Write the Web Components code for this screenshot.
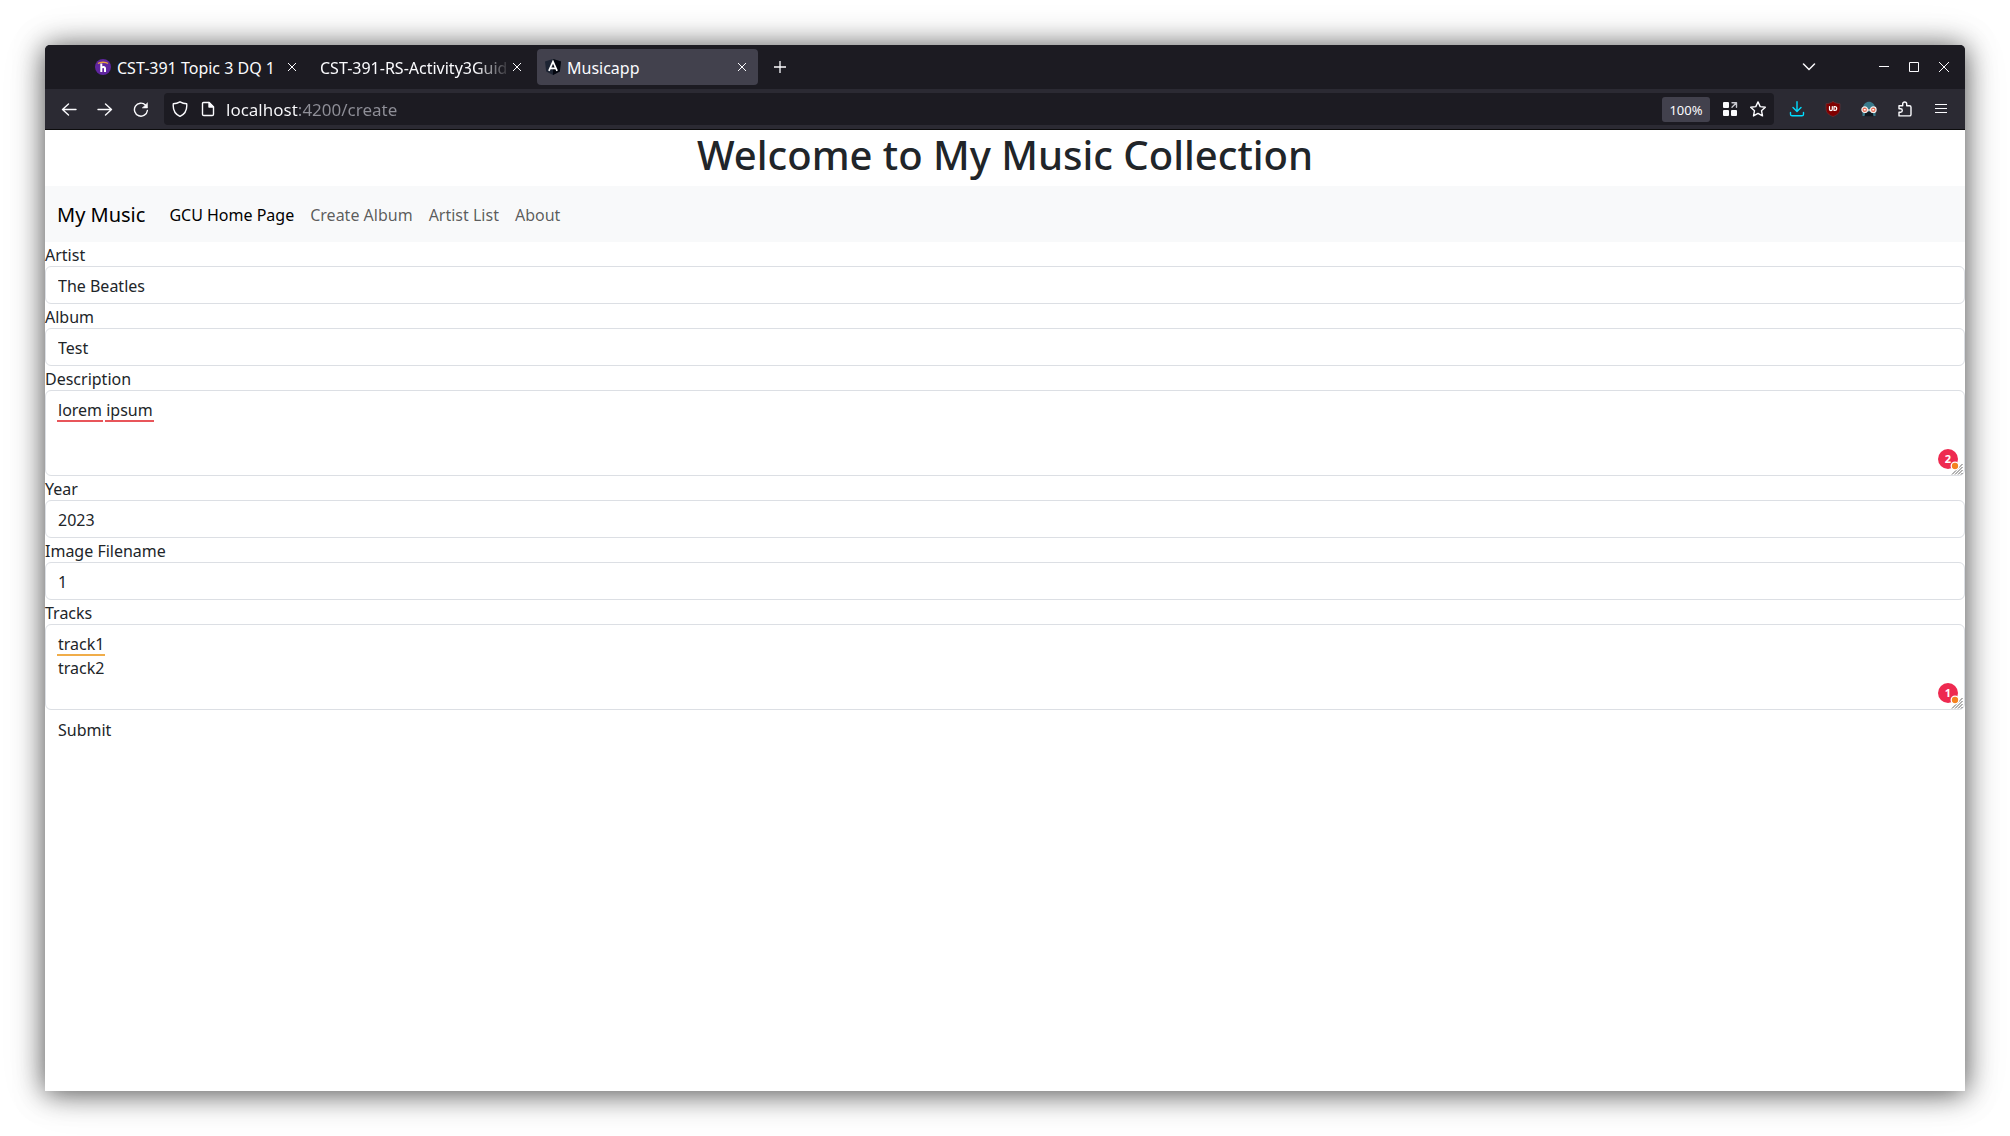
<!DOCTYPE html>
<html lang="en">
<head>
<meta charset="utf-8">
<title>Musicapp</title>
<style>
  body { margin: 0; background: #fff; font: 16px/24px "Noto Sans", sans-serif; color: #212529; }
</style>
</head>
<body>
<browser-window>
  <tab-strip slot="tabs">
    <browser-tab label="CST-391 Topic 3 DQ 1">
      <svg slot="icon" width="16" height="16" viewBox="0 0 16 16"><circle cx="8" cy="8" r="8" fill="#5f259f"/><path d="M6.300 4.600V13M6.300 9c.5-1.300 3.700-1.700 3.700.6V13" fill="none" stroke="#fff" stroke-width="2"/><path d="M3 4.600C5 2.800 11 2.800 13 4.600" fill="none" stroke="#e8a33d" stroke-width="1.300"/></svg>
    </browser-tab>
    <browser-tab label="CST-391-RS-Activity3Guid" fade></browser-tab>
    <browser-tab label="Musicapp" active>
      <svg slot="icon" width="16" height="16" viewBox="0 0 16 16"><path d="M8 0l8 2.600-1.200 10L8 16l-6.800-3.400L0 2.600z" fill="#1d2433"/><path d="M8 0l8 2.600-1.200 10L8 16z" fill="#03060f"/><path d="M3.900 11.900L8 2.600l4.100 9.300M5.600 9.300h4.800" fill="none" stroke="#fff" stroke-width="1.700"/></svg>
    </browser-tab>
  </tab-strip>
  <tool-bar slot="toolbar"></tool-bar>
  <music-app></music-app>
</browser-window>

<script>
const define = (name, html, setup) => {
  const template = document.createElement('template');
  template.innerHTML = html;
  customElements.define(name, class extends HTMLElement {
    constructor() {
      super();
      this.attachShadow({ mode: 'open' }).append(template.content.cloneNode(true));
    }
    connectedCallback() { if (setup) setup(this, this.shadowRoot); }
  });
};

define('browser-window', `
  <style>
    :host { display: flex; flex-direction: column; margin: 45px; min-height: calc(100vh - 90px); background: #fff;
      border-radius: 5px 5px 0 0; box-shadow: 0 2px 28px rgba(0,0,0,.66), 0 2px 48px rgba(0,0,0,.12); }
    header { background: #2b2a33; border-radius: 5px 5px 0 0; border-bottom: 1px solid #0c0c0d; overflow: hidden; }
  </style>
  <header><slot name="tabs"></slot><slot name="toolbar"></slot></header>
  <slot></slot>`);

define('tab-strip', `
  <style>
    :host { display: flex; align-items: center; gap: 4px; height: 44px; padding: 0 6px 0 42px; background: #1c1b22; }
    button { display: grid; place-items: center; width: 36px; height: 36px; padding: 0; border: 0; background: none; color: #fbfbfe; }
    .space { flex: 1; }
    .controls { display: flex; }
    .controls button { width: 30px; }
    .list { margin-right: 38px; }
    svg { fill: none; stroke: currentColor; }
  </style>
  <slot></slot>
  <button aria-label="New tab"><svg width="12" height="12" stroke-width="1.300"><path d="M6 0v12M0 6h12"/></svg></button>
  <span class="space"></span>
  <button class="list" aria-label="List all tabs"><svg width="14" height="8" stroke-width="1.500"><path d="M1.500 1L7 6.500 12.500 1" stroke-linecap="round"/></svg></button>
  <div class="controls">
    <button aria-label="Minimize"><svg width="10" height="10"><path d="M0 4.500h10"/></svg></button>
    <button aria-label="Maximize"><svg width="10" height="10"><path d="M.5.5h9v9h-9z"/></svg></button>
    <button aria-label="Close window"><svg width="10" height="10"><path d="M0 0l10 10M10 0L0 10"/></svg></button>
  </div>`);

define('browser-tab', `
  <style>
    :host { display: flex; align-items: center; box-sizing: border-box; width: 221px; height: 36px; padding: 0 4px 0 8px; border-radius: 4px; color: #fbfbfe; }
    :host([active]) { background: #42414d; }
    ::slotted(svg) { display: block; margin-right: 6px; }
    span { flex: 1; min-width: 0; padding-top: 2px; white-space: nowrap; }
    :host([fade]) span { margin-right: -6px; -webkit-mask-image: linear-gradient(to left, transparent, #000 36px); mask-image: linear-gradient(to left, transparent, #000 36px); }
    button { display: grid; place-items: center; width: 24px; height: 24px; padding: 0; border: 0; background: none; color: #fbfbfe; }
  </style>
  <slot name="icon"></slot><span></span>
  <button aria-label="Close tab"><svg width="8" height="8" fill="none" stroke="currentColor"><path d="M0 0l8 8M8 0L0 8"/></svg></button>`,
  (el, root) => { root.querySelector('span').textContent = el.getAttribute('label'); });

define('tool-bar', `
  <style>
    :host { display: flex; align-items: center; height: 40px; padding: 0 6px; color: #fbfbfe; }
    button { display: grid; place-items: center; width: 36px; height: 32px; padding: 0; border: 0; background: none; color: inherit; font: inherit; }
    svg { fill: none; stroke: currentColor; stroke-width: 1.400; stroke-linecap: round; stroke-linejoin: round; }
    .url { flex: 1; display: flex; align-items: center; height: 32px; margin: 0 5px; padding: 0 2px; border-radius: 4px; background: #1c1b22; }
    .url button { width: 28px; }
    .url input { flex: 1; min-width: 0; margin: 0 4px; padding: 2px 0 0; border: 0; outline: 0; font: inherit; font-size: 17px; line-height: 24px; color: #fbfbfe;
      background: linear-gradient(to right, #fbfbfe 72px, #8f8f98 72px); -webkit-background-clip: text; background-clip: text; -webkit-text-fill-color: transparent; }
    .url .zoom { width: 48px; height: 25px; margin-right: 6px; padding-top: 1px; border-radius: 3px; background: #42414d; font-size: 13px; line-height: 24px; }
  </style>
  <button aria-label="Back"><svg width="16" height="16"><path d="M15 8.500H1.500M7.500 3L1.500 8.500l6 5.500"/></svg></button>
  <button aria-label="Forward"><svg width="16" height="16"><path d="M1 8.500h13.500M8.500 3l6 5.500-6 5.500"/></svg></button>
  <button aria-label="Reload"><svg width="16" height="16"><path d="M14.400 9.500A6.500 6.500 0 1 1 12.500 4"/><path d="M14.500 2v5h-5z" fill="currentColor" stroke-width=".5"/></svg></button>
  <div class="url">
    <button aria-label="Tracking protection"><svg width="16" height="16"><path d="M8 .8C6 2 3.500 2.700 1.300 2.800.8 8 2.700 13 8 15.400c5.300-2.400 7.200-7.400 6.700-12.600C12.500 2.700 10 2 8 .8z"/></svg></button>
    <button aria-label="Site information"><svg width="16" height="16"><path d="M3.500 1.500H9L13.500 6v7.200q0 1.300-1.300 1.300H3.800q-1.300 0-1.300-1.300V2.500q0-1 1-1z"/><path d="M9 1.500V6h4.500z" fill="currentColor"/></svg></button>
    <input type="text" aria-label="Address" value="localhost:4200/create" spellcheck="false">
    <button class="zoom">100%</button>
    <button aria-label="Apps"><svg width="16" height="16"><g fill="currentColor" stroke="none"><rect x="1" y="1" width="6" height="6" rx="1"/><rect x="1" y="9" width="6" height="6" rx="1"/><rect x="9" y="9" width="6" height="6" rx="1"/></g><path d="M10 1.700h4.500v4.500M14.200 2L10 6.200" stroke="#c8c8cf"/></svg></button>
    <button aria-label="Bookmark"><svg width="16" height="16"><path d="M8 .9l2.200 4.700 5.100.6-3.800 3.500 1 5.200L8 12.400l-4.500 2.500 1-5.200L.7 6.200l5.100-.6z"/></svg></button>
  </div>
  <button aria-label="Downloads" style="color:#00ddff"><svg width="16" height="16"><path d="M8 .8v9.400M4 6.500l4 4 4-4M1.500 11.500v1.700q0 1.600 1.600 1.600h9.800q1.600 0 1.600-1.600v-1.700"/></svg></button>
  <button aria-label="uBlock Origin"><svg width="16" height="16"><path d="M8 .5C6 2 3.500 2.600 1 2.700v5C1 12 4 14 8 15.600c4-1.600 7-3.600 7-7.900v-5C12.500 2.600 10 2 8 .5z" fill="#800000" stroke="#65343b" stroke-width=".7"/><path d="M4.500 5.500v2.800c0 1.700 2.800 1.700 2.800 0V5.500M9 5.700h.8a1.900 1.900 0 0 1 0 3.800H9z" stroke="#fff" stroke-width="1.200"/></svg></button>
  <button aria-label="Privacy extension"><svg width="16" height="16"><g stroke="none"><path d="M2 8C1.500-1.600 14.500-1.600 14 8z" fill="#397a8b"/><path d="M1.500 10h13v5h-13z" fill="#397a8b"/><path d="M3.500 15.300l1-4.500h7l1 4.500z" fill="#111820"/></g><path d="M6 9h4" stroke="#f3efee" stroke-width="1.500"/><g fill="#e66b51" stroke="#f3efee" stroke-width="1.200"><circle cx="3.700" cy="8.700" r="2.800"/><circle cx="12.300" cy="8.700" r="2.800"/></g><path d="M3.300 8.700h.9M11.800 8.700h.9" stroke="#fff"/></svg></button>
  <button aria-label="Extensions"><svg width="16" height="16"><path d="M2 14.900V11.200h1.600a1.700 1.700 0 0 0 0-3.400H2V4.700h3.700V3a2 2 0 0 1 4 0v1.700H12.500q1.500 0 1.500 1.500v7.200q0 1.500-1.500 1.500z"/></svg></button>
  <button aria-label="Menu"><svg width="16" height="16" style="stroke-width:1.200;stroke-linecap:butt"><path d="M2 3.500h12M2 7.500h12M2 11.500h12"/></svg></button>`);

define('music-app', `
  <style>
    :host { display: block; }
    h1 { margin: 0; padding: 1px 0 7px; font-size: 40px; line-height: 48px; font-weight: 500; text-align: center; }
    form { display: block; }
    button { display: block; padding: 7px 12px 5px; border: 1px solid transparent; border-radius: 6px; background: none; color: inherit; font: inherit; }
  </style>
  <h1>Welcome to My Music Collection</h1>
  <nav-bar></nav-bar>
  <form>
    <form-field label="Artist" value="The Beatles"></form-field>
    <form-field label="Album" value="Test"></form-field>
    <form-field label="Description" value="lorem ipsum" rows="3" issues="2">
      <text-mark style="--width:46px"></text-mark><text-mark style="--width:49px"></text-mark>
    </form-field>
    <form-field label="Year" value="2023"></form-field>
    <form-field label="Image Filename" value="1"></form-field>
    <form-field label="Tracks" value="track1&#10;track2" rows="3" issues="1">
      <text-mark style="--width:48px;--color:#f0ad4a"></text-mark>
    </form-field>
    <button type="button">Submit</button>
  </form>`);

define('nav-bar', `
  <style>
    :host { display: block; background: #f8f9fa; }
    nav { display: flex; align-items: center; padding: 8px 12px; }
    a { padding: 9px 8px 7px; color: rgba(0,0,0,.65); text-decoration: none; }
    a.brand { margin-right: 16px; padding: 6px 0 4px; font-size: 20px; line-height: 30px; color: #000; }
    a.active { color: #000; }
  </style>
  <nav>
    <a class="brand" href="#">My Music</a>
    <a class="active" href="#">GCU Home Page</a>
    <a href="#">Create Album</a>
    <a href="#">Artist List</a>
    <a href="#">About</a>
  </nav>`);

define('text-mark', `
  <style>:host { display: block; width: var(--width); height: 2px; background: var(--color, #e8555a); }</style>`);

define('form-field', `
  <style>
    :host { display: block; }
    label { display: block; width: fit-content; height: 24px; line-height: 26px; }
    .box { position: relative; }
    input, textarea { display: block; box-sizing: border-box; width: 100%; margin: 0; padding: 7px 12px 5px; border: 1px solid #dcdfe4; border-radius: 6px;
      background: #fff; color: inherit; font: inherit; outline: 0; resize: none; overflow: hidden; }
    input { height: 38px; }
    .marks { position: absolute; left: 12px; top: 30px; display: flex; gap: 2px; pointer-events: none; }
    .badge { position: absolute; right: 7px; bottom: 7px; width: 20px; height: 20px; border-radius: 50%; background: #ee2a50; color: #fff;
      font-size: 11px; line-height: 20px; font-weight: 700; text-align: center; }
    .corner { position: absolute; right: 2px; bottom: 1px; }
  </style>
  <label for="control"></label>
  <div class="box"><div class="marks"><slot></slot></div></div>`,
  (el, root) => {
    const rows = el.getAttribute('rows');
    const control = document.createElement(rows ? 'textarea' : 'input');
    control.id = 'control';
    control.spellcheck = false;
    if (rows) control.rows = rows; else control.type = 'text';
    control.value = el.getAttribute('value');
    root.querySelector('label').textContent = el.getAttribute('label');
    const box = root.querySelector('.box');
    box.prepend(control);
    if (el.hasAttribute('issues')) {
      box.insertAdjacentHTML('beforeend', `<span class="badge">${el.getAttribute('issues')}</span>
        <svg class="corner" width="14" height="14" viewBox="0 0 14 14"><path d="M3 13.500L13.500 3M6 13.500L13.500 6M9 13.500L13.500 9M12 13.500l1.500-1.500" stroke="#666" fill="none"/><circle cx="6" cy="5" r="3.800" fill="#f58220" stroke="#fff" stroke-width="1.300"/></svg>`);
    }
  });
</script>
</body>
</html>
